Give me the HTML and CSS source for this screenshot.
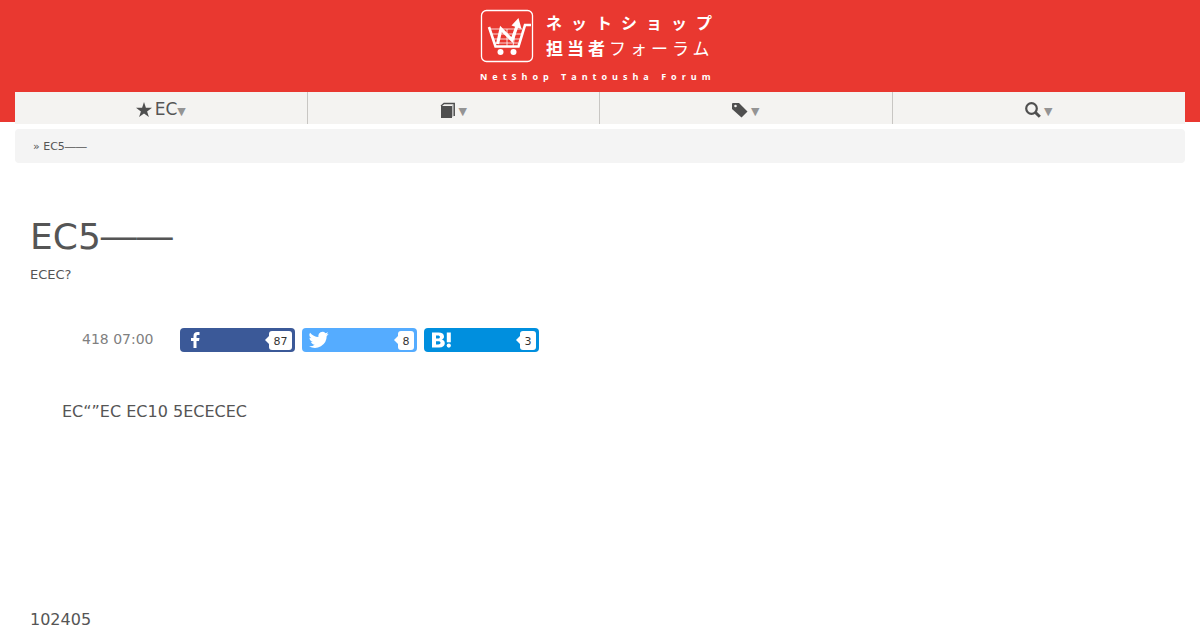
FILE: index.html
```html
<!DOCTYPE html>
<html lang="ja">
<head>
	<meta charset="UTF-8">
	<meta name="viewport" content="width=device-width, initial-scale=1">
	<title>ネットショップ担当者フォーラム</title>
	<link rel="stylesheet" href="styles.css">
</head>
<body>
	<header class="header">
		<a class="logo" href="#">
			<svg class="logo-mark" width="54" height="54" viewBox="0 0 54 54" fill="none" stroke="#fff">
				<rect x="1.500" y="1.500" width="51" height="51" rx="5" stroke-width="1.300"/>
				<path d="M9 18L15.500 37.500H38.500L45 16H51" stroke-width="2.600"/>
				<path d="M10 20H42M12 25H41M13 30H40M14 34H38M27 20V37M36 20L33 37" stroke-width="0.800"/>
				<path d="M17.500 35L21 20L32 31L37 17" stroke-width="3.200"/>
				<path d="M38.500 9L41.500 20L31.500 16.500Z" fill="#fff" stroke="none"/>
				<circle cx="20.500" cy="43" r="3" fill="#fff" stroke="none"/>
				<circle cx="33.500" cy="43" r="3" fill="#fff" stroke="none"/>
			</svg>
			<span class="logo-name">
				<span class="logo-line logo-top">ネットショップ</span>
				<span class="logo-line logo-bottom"><b>担当者</b>フォーラム</span>
			</span>
			<span class="logo-roman">NetShop Tantousha Forum</span>
		</a>
		<nav class="nav">
			<a class="nav-item" href="#">
				<svg width="16" height="16" viewBox="0 0 16 16"><path d="M8 0L9.900 5.800H16L11.100 9.400L12.900 15L8 11.500L3.100 15L4.900 9.400L0 5.800H6.100Z"/></svg>
				<span class="nav-label">EC</span><span class="arrow">▼</span>
			</a>
			<a class="nav-item" href="#" aria-label="連載">
				<svg width="16" height="16" viewBox="0 0 16 16"><path d="M12 4L14 1V14L12 15Z" fill="#bbb"/><path d="M1 4L4 1.500H14.300V14" fill="none" stroke="#4f4f4f" stroke-width="1.300"/><path d="M1 4H12V16H1Z"/></svg>
				<span class="arrow spaced">▼</span>
			</a>
			<a class="nav-item" href="#" aria-label="タグ">
				<svg width="16" height="16" viewBox="0 0 16 16"><path fill-rule="evenodd" d="M0 2Q0 1 1 1H7L15.500 9.500L9.500 15.500L0 7ZM3.500 2.700A1.300 1.300 0 1 0 3.500 5.300A1.300 1.300 0 1 0 3.500 2.700Z"/></svg>
				<span class="arrow spaced">▼</span>
			</a>
			<a class="nav-item" href="#" aria-label="検索">
				<svg width="16" height="16" viewBox="0 0 16 16" fill="none" stroke="#4f4f4f"><circle cx="6.500" cy="6.500" r="5.300" stroke-width="2.200"/><path d="M10.500 10.500L14.800 14.800" stroke-width="3"/></svg>
				<span class="arrow spaced">▼</span>
			</a>
		</nav>
	</header>

	<div class="breadcrumb">» EC5――</div>

	<main class="article">
		<h1>EC5――</h1>
		<p class="lead">ECEC?</p>
		<div class="meta">
			<time class="date">418 07:00</time>
			<a class="share facebook" href="#" aria-label="Facebook">
				<svg width="20" height="20" viewBox="0 0 20 20"><path d="M6.500 18V11H4V8H6.500V6C6.500 3.300 8 2 10.500 2H12.500V5H11C10 5 9.500 5.500 9.500 6.300V8H12.500L12 11H9.500V18Z"/></svg>
				<span class="count">87</span>
			</a>
			<a class="share twitter" href="#" aria-label="Twitter">
				<svg width="20" height="20" viewBox="0 0 24 24"><path d="M23.600 4.600a10 10 0 0 1-2.800.8 4.900 4.900 0 0 0 2.100-2.700 10 10 0 0 1-3.100 1.200 4.900 4.900 0 0 0-8.400 4.500A14 14 0 0 1 1.300 3.200a4.900 4.900 0 0 0 1.500 6.600 4.900 4.900 0 0 1-2.200-.6 4.900 4.900 0 0 0 3.900 4.900 5 5 0 0 1-2.200.1 4.900 4.900 0 0 0 4.600 3.400A9.900 9.900 0 0 1 0 19.500 14 14 0 0 0 21.200 7.100a10 10 0 0 0 2.400-2.500Z"/></svg>
				<span class="count">8</span>
			</a>
			<a class="share hatena" href="#" aria-label="はてなブックマーク">
				<svg width="22" height="20" viewBox="0 0 22 20"><path fill-rule="evenodd" d="M1 2.500H7.500C11 2.500 13 4 13 6.500C13 8.300 12.100 9.200 10.600 9.600C12.600 10 13.800 11.300 13.800 13.300C13.800 16 11.800 17.500 8.200 17.500H1ZM5 5.500V8.500H6.800C8.200 8.500 8.900 8 8.900 7C8.900 6 8.200 5.500 6.900 5.500ZM5 11.300V14.400H7.200C8.700 14.400 9.500 13.900 9.500 12.800C9.500 11.800 8.800 11.300 7.300 11.300Z"/><path d="M15.800 2.500H19.800V12.300H15.800Z"/><circle cx="17.800" cy="15.600" r="2.100"/></svg>
				<span class="count">3</span>
			</a>
		</div>
		<p class="intro">EC“”EC EC10 5ECECEC</p>
		<p class="text">102405</p>
	</main>
</body>
</html>
```
FILE: styles.css
```css
*{
	box-sizing: border-box;
}
html{
	overflow-x: hidden;
}
body{
	margin: 0;
	background-color: #fff;
	color: #555;
	font-family: "DejaVu Sans", "Noto Sans CJK JP", sans-serif;
	font-size: 16px;
	line-height: 24px;
}
a{
	color: inherit;
	text-decoration: none;
}
svg{
	flex: none;
}

/* header */
.header{
	display: flow-root;
	padding: 0 15px;
	background-color: #e93830;
}
.logo{
	display: grid;
	grid-template-columns: 54px 1fr;
	column-gap: 12px;
	align-content: start;
	width: 240px;
	height: 92px;
	margin: 0 auto;
	padding-top: 9px;
	color: #fff;
	white-space: nowrap;
}
.logo-line{
	display: block;
	height: 26px;
	line-height: 26px;
	font-family: "Noto Sans CJK JP", sans-serif;
}
.logo-top{
	font-size: 16px;
	font-weight: bold;
	letter-spacing: 9px;
}
.logo-bottom{
	font-size: 17px;
	letter-spacing: 4px;
}
.logo-roman{
	grid-column: 1 / 3;
	margin-top: 6px;
	font-family: "Open Sans", sans-serif;
	font-size: 9px;
	font-weight: bold;
	line-height: 16px;
	letter-spacing: 5px;
}

.nav{
	display: grid;
	grid-template-columns: repeat(4, 1fr);
	margin-bottom: -2px;
	background-color: #f4f3f1;
}
.nav-item{
	display: flex;
	align-items: center;
	justify-content: center;
	height: 32px;
	padding-top: 4px;
	border-right: 1px solid #c8c6c3;
	fill: #4f4f4f;
}
.nav-item:last-child{
	border-right: none;
}
.nav-label{
	margin-left: 3px;
	padding-bottom: 3px;
	font-size: 17px;
}
.arrow{
	padding-top: 3px;
	color: #949494;
	font-size: 11px;
}
.spaced{
	margin-left: 3px;
}

.breadcrumb{
	margin: 7px 15px 0;
	padding: 6px 18px 4px;
	border-radius: 4px;
	background-color: #f4f4f4;
	font-size: 11px;
}

/* article */
.article{
	padding: 0 30px;
}
h1{
	margin: 52px 0 0;
	font-size: 36px;
	font-weight: normal;
	line-height: 44px;
}
.lead{
	margin: 4px 0 0;
	font-size: 13px;
}
.meta{
	display: flex;
	align-items: center;
	gap: 7px;
	margin: 41px 0 0 52px;
}
.date{
	margin-right: 19px;
	padding-bottom: 2px;
	color: #808080;
	font-size: 14px;
	line-height: 22px;
}
.share{
	display: flex;
	align-items: center;
	justify-content: space-between;
	width: 115px;
	height: 24px;
	padding: 0 3px 0 7px;
	border-radius: 4px;
	fill: #fff;
}
.facebook{
	background-color: #3b5998;
}
.twitter{
	background-color: #55acff;
}
.hatena{
	background-color: #008fde;
}
.count{
	position: relative;
	height: 19px;
	padding: 0 4px 0 5px;
	border-radius: 3px;
	background-color: #fff;
	color: #333;
	font-size: 11px;
	line-height: 21px;
}
.count::before{
	content: "";
	position: absolute;
	top: 5px;
	left: -4px;
	border: 4px solid transparent;
	border-left-width: 0;
	border-right-color: #fff;
}
.intro{
	margin: 48px 32px 0;
}
.text{
	margin: 184px 0 0;
}
```
